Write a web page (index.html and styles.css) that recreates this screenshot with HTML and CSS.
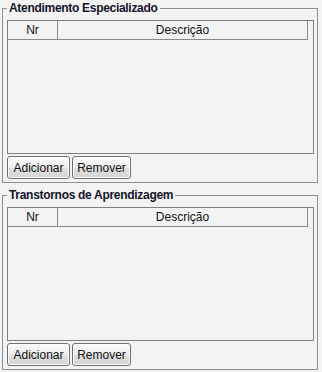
FILE: index.html
```html
<!DOCTYPE html>
<html lang="pt">
  <head>
    <meta charset="UTF-8" />
    <title>Atendimento</title>
    <link rel="stylesheet" href="styles.css">
  </head>
  <body>
    <fieldset class="group">
      <legend>Atendimento Especializado</legend>
      <div class="table-pane">
        <div class="table-header">
          <div class="col col-nr">Nr</div>
          <div class="col col-desc">Descrição</div>
        </div>
      </div>
      <div class="actions">
        <button class="btn btn-add">Adicionar</button>
        <button class="btn btn-remove">Remover</button>
      </div>
    </fieldset>

    <fieldset class="group">
      <legend>Transtornos de Aprendizagem</legend>
      <div class="table-pane">
        <div class="table-header">
          <div class="col col-nr">Nr</div>
          <div class="col col-desc">Descrição</div>
        </div>
      </div>
      <div class="actions">
        <button class="btn btn-add">Adicionar</button>
        <button class="btn btn-remove">Remover</button>
      </div>
    </fieldset>
  </body>
</html>
```

FILE: styles.css
```css
* {
  margin: 0;
  padding: 0;
  box-sizing: border-box;
}

html,
body {
  background: #f3f3f3;
}

body {
  font-family: 'Liberation Sans', Arial, sans-serif;
  font-size: 12px;
  color: #1a1a1a;
  padding: 1px 4px 0 2px;
  width: 322px;
  height: 372px;
  overflow: hidden;
}

.group {
  border: 1px solid #8e8e8e;
  padding: 5px 3px 3px 4px;
  margin-bottom: 5px;
}

.group legend {
  font-weight: bold;
  font-size: 12px;
  line-height: 14px;
  letter-spacing: -0.3px;
  padding: 0 2px;
  color: #14142a;
}

.table-pane {
  height: 134px;
  border: 1px solid #7f7f7f;
  background: #f3f3f3;
}

.table-header {
  display: flex;
  width: 300px;
  height: 19px;
  border-bottom: 1px solid #8a8a8a;
  border-right: 1px solid #8a8a8a;
}

.col {
  display: flex;
  align-items: center;
  justify-content: center;
  line-height: 18px;
  color: #111;
}

.col-nr {
  width: 50px;
  border-right: 1px solid #8a8a8a;
}

.col-desc {
  flex: 1;
}

.actions {
  display: flex;
  gap: 2px;
  margin-top: 2px;
}

.btn {
  font-family: 'Liberation Sans', Arial, sans-serif;
  font-size: 12px;
  color: #111;
  height: 23px;
  border: 1px solid #707070;
  border-radius: 3px;
  background: linear-gradient(#fbfbfb, #ececec 50%, #e0e0e0 51%, #d4d4d4);
  box-shadow: inset 0 0 0 1px #fcfcfc;
}

.btn-add {
  width: 63px;
}

.btn-remove {
  width: 59px;
}
```
